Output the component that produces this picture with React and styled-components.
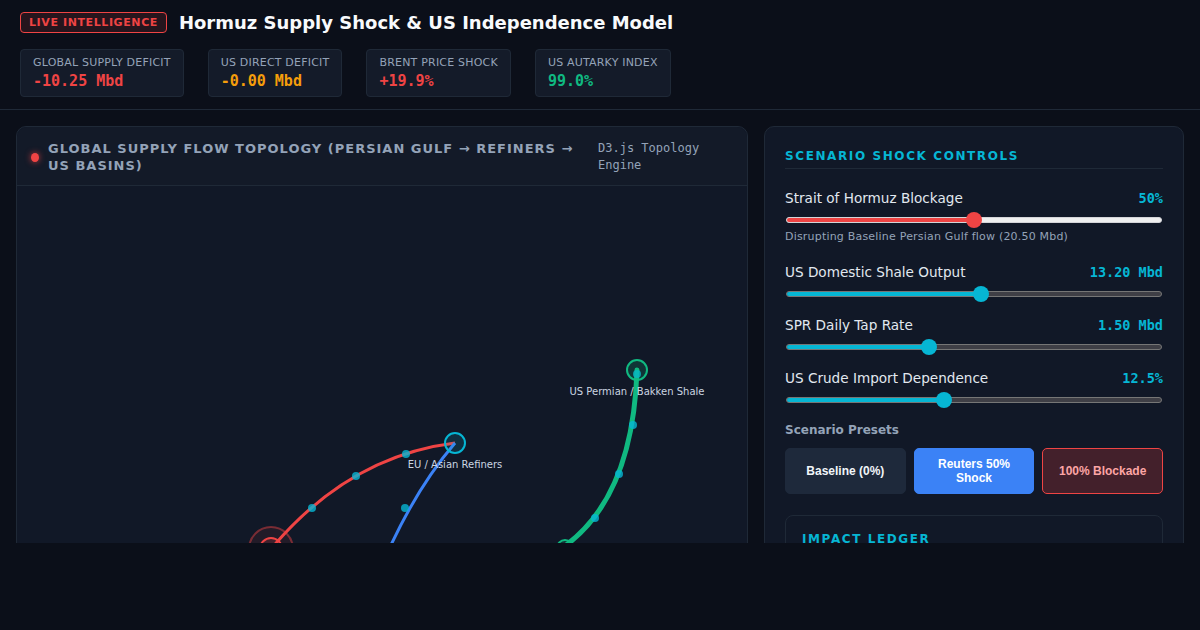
import React from "react";
import styled, { createGlobalStyle } from "styled-components";

const Global = createGlobalStyle`
  html, body { margin: 0; padding: 0; background: #0b0f19; }
  body { font-family: "DejaVu Sans", "Noto Sans", sans-serif; color: #e2e8f0; }
  * { box-sizing: border-box; }
`;

const Page = styled.div`
  width: 1200px;
  height: 543px;
  overflow: hidden;
  background: #0b0f19;
  display: flex;
  flex-direction: column;
`;

const Header = styled.header`
  padding: 12px 20px 12px;
  border-bottom: 1px solid #1f2937;
  display: flex;
  flex-direction: column;
  gap: 16px;
`;

const TitleRow = styled.div`
  display: flex;
  align-items: center;
  gap: 12px;
`;

const Badge = styled.span`
  font-size: 11px;
  font-weight: bold;
  letter-spacing: 0.6px;
  color: #ef4444;
  background: rgba(239, 68, 68, 0.12);
  border: 1px solid #ef4444;
  border-radius: 4px;
  padding: 3px 8px;
  line-height: 13px;
`;

const Title = styled.h1`
  margin: 0;
  font-size: 18px;
  font-weight: bold;
  color: #f8fafc;
`;

const Stats = styled.div`
  display: flex;
  gap: 24px;
`;

const StatCard = styled.div`
  background: #141b29;
  border: 1px solid #1f2937;
  border-radius: 4px;
  padding: 6px 12px 6px;
  display: flex;
  flex-direction: column;
  gap: 3px;
`;

const StatLabel = styled.div`
  font-size: 11px;
  letter-spacing: 0.2px;
  color: #94a3b8;
  text-transform: uppercase;
`;

const StatValue = styled.div`
  font-family: "DejaVu Sans Mono", monospace;
  font-size: 15px;
  font-weight: bold;
  color: ${(p) => p.$color};
`;

const Main = styled.main`
  flex: 1;
  display: flex;
  gap: 16px;
  padding: 16px;
  min-height: 0;
`;

const Panel = styled.section`
  background: #111827;
  border: 1px solid #1f2937;
  border-radius: 10px;
  ${(p) => (p.$width ? `width: ${p.$width}px; flex: none;` : "flex: 1;")}
  display: flex;
  flex-direction: column;
  min-height: 700px;
`;

const PanelHead = styled.div`
  display: flex;
  align-items: center;
  justify-content: space-between;
  gap: 20px;
  padding: 13px 16px 11px 14px;
  border-bottom: 1px solid #1f2937;
  background: #131a28;
  border-radius: 10px 10px 0 0;
`;

const HeadLeft = styled.div`
  display: flex;
  align-items: center;
  gap: 9px;
`;

const Dot = styled.span`
  width: 8px;
  height: 9px;
  border-radius: 50%;
  background: #ef4444;
  box-shadow: 0 0 6px rgba(239, 68, 68, 0.8);
  flex: none;
`;

const PanelTitle = styled.h2`
  margin: 0;
  font-size: 13px;
  font-weight: bold;
  letter-spacing: 1px;
  line-height: 17px;
  color: #94a3b8;
  text-transform: uppercase;
`;

const EngineTag = styled.span`
  font-family: "DejaVu Sans Mono", monospace;
  font-size: 12px;
  line-height: 17px;
  color: #94a3b8;
  width: 133px;
  flex: none;
`;

const Canvas = styled.svg`
  display: block;
  width: 100%;
  height: 520px;
`;

const NodeLabel = styled.text`
  font-family: "DejaVu Sans", sans-serif;
  font-size: 10px;
  fill: #cbd5e1;
  text-anchor: middle;
`;

const Controls = styled.div`
  padding: 22px 20px 20px;
  display: flex;
  flex-direction: column;
`;

const SectionTitle = styled.h3`
  margin: 0;
  font-size: 12px;
  font-weight: bold;
  letter-spacing: 1.6px;
  line-height: 15px;
  color: #06b6d4;
  text-transform: uppercase;
  padding-bottom: ${(p) => (p.$line ? "4px" : "0")};
  border-bottom: ${(p) => (p.$line ? "1px solid #1f2937" : "none")};
`;

const SliderGroup = styled.div`
  display: flex;
  flex-direction: column;
  gap: 16px;
  margin-top: 21px;
`;

const SliderBlock = styled.div`
  display: flex;
  flex-direction: column;
`;

const SliderHead = styled.div`
  display: flex;
  justify-content: space-between;
  align-items: baseline;
`;

const SliderLabel = styled.span`
  font-size: 13.6px;
  color: #e2e8f0;
`;

const SliderValue = styled.span`
  font-family: "DejaVu Sans Mono", monospace;
  font-size: 13.5px;
  font-weight: bold;
  color: #06b6d4;
`;

const Track = styled.div`
  position: relative;
  height: 6px;
  margin: 11px 1px 4px;
  border-radius: 3px;
  background: ${(p) => (p.$light ? "#efefef" : "#3f3f46")};
  border: 1px solid ${(p) => (p.$light ? "#d4d4d8" : "#767676")};
`;

const Fill = styled.div`
  height: 100%;
  border-radius: 3px;
  background: ${(p) => p.$color};
`;

const Thumb = styled.div`
  position: absolute;
  top: 50%;
  width: 16px;
  height: 16px;
  margin: -8px 0 0 -8px;
  border-radius: 50%;
  background: ${(p) => p.$color};
`;

const Note = styled.div`
  font-size: 11px;
  color: #94a3b8;
  margin: 3px 0 5px;
  letter-spacing: 0.2px;
`;

const PresetTitle = styled.div`
  font-size: 12px;
  font-weight: bold;
  color: #94a3b8;
  margin-top: 16px;
`;

const Presets = styled.div`
  display: grid;
  grid-template-columns: repeat(3, 1fr);
  gap: 8px;
  margin-top: 11px;
`;

const PresetButton = styled.button`
  height: 46px;
  border-radius: 5px;
  font-family: "Liberation Sans", Arial, sans-serif;
  font-size: 12px;
  font-weight: bold;
  line-height: 14px;
  padding: 0 10px;
  cursor: pointer;
  color: ${(p) => p.$fg};
  background: ${(p) => p.$bg};
  border: 1px solid ${(p) => p.$border || p.$bg};
`;

const Ledger = styled.div`
  margin-top: 21px;
  border: 1px solid #1f2937;
  border-radius: 8px;
  padding: 16px 16px;
  background: #111827;
  min-height: 200px;
`;

const sliders = [
  { label: "Strait of Hormuz Blockage", value: "50%", pct: 50, color: "#ef4444", light: true, note: "Disrupting Baseline Persian Gulf flow (20.50 Mbd)" },
  { label: "US Domestic Shale Output", value: "13.20 Mbd", pct: 52, color: "#06b6d4" },
  { label: "SPR Daily Tap Rate", value: "1.50 Mbd", pct: 38, color: "#06b6d4" },
  { label: "US Crude Import Dependence", value: "12.5%", pct: 42, color: "#06b6d4" },
];

const stats = [
  { label: "Global Supply Deficit", value: "-10.25 Mbd", color: "#ef4444" },
  { label: "US Direct Deficit", value: "-0.00 Mbd", color: "#f59e0b" },
  { label: "Brent Price Shock", value: "+19.9%", color: "#ef4444" },
  { label: "US Autarky Index", value: "99.0%", color: "#10b981" },
];

function Topology() {
  const particle = (x, y, k) => (
    <circle key={k} cx={x} cy={y} r="4" fill="#06b6d4" opacity="0.8" />
  );
  return (
    <Canvas viewBox="0 0 730 520" preserveAspectRatio="xMinYMin meet">
      <g transform="translate(0 1)">
        <path d="M254 362 Q332 269 438 256" fill="none" stroke="#ef4444" strokeWidth="3" />
        <path d="M345 430 Q383 320 438 256" fill="none" stroke="#3b82f6" strokeWidth="3" />
        <path d="M548 359 Q616 309 620 183" fill="none" stroke="#10b981" strokeWidth="5" strokeLinecap="round" />
        {[[295, 321], [339, 289], [389, 267], [388, 321], [578, 331], [602, 287], [616, 238], [620, 187]].map(
          ([x, y], i) => particle(x, y, i)
        )}
        <circle cx="254" cy="362" r="22" fill="rgba(239,68,68,0.08)" stroke="rgba(239,68,68,0.45)" strokeWidth="2" />
        <circle cx="254" cy="362" r="11" fill="rgba(239,68,68,0.15)" stroke="#ef4444" strokeWidth="2" />
        <circle cx="438" cy="256" r="10" fill="rgba(6,182,212,0.15)" stroke="#06b6d4" strokeWidth="2" />
        <NodeLabel x="438" y="281">EU / Asian Refiners</NodeLabel>
        <circle cx="620" cy="183" r="10" fill="rgba(16,185,129,0.18)" stroke="#10b981" strokeWidth="2" />
        <NodeLabel x="620" y="208">US Permian / Bakken Shale</NodeLabel>
        <circle cx="548" cy="361" r="8" fill="rgba(16,185,129,0.18)" stroke="#10b981" strokeWidth="2" />
      </g>
    </Canvas>
  );
}

export default function App() {
  return (
    <Page>
      <Global />
      <Header>
        <TitleRow>
          <Badge>LIVE INTELLIGENCE</Badge>
          <Title>Hormuz Supply Shock &amp; US Independence Model</Title>
        </TitleRow>
        <Stats>
          {stats.map((s) => (
            <StatCard key={s.label}>
              <StatLabel>{s.label}</StatLabel>
              <StatValue $color={s.color}>{s.value}</StatValue>
            </StatCard>
          ))}
        </Stats>
      </Header>
      <Main>
        <Panel>
          <PanelHead>
            <HeadLeft>
              <Dot />
              <PanelTitle>Global Supply Flow Topology (Persian Gulf → Refiners → US Basins)</PanelTitle>
            </HeadLeft>
            <EngineTag>D3.js Topology Engine</EngineTag>
          </PanelHead>
          <Topology />
        </Panel>
        <Panel $width={420}>
          <Controls>
            <SectionTitle $line>Scenario Shock Controls</SectionTitle>
            <SliderGroup>
              {sliders.map((s) => (
                <SliderBlock key={s.label}>
                  <SliderHead>
                    <SliderLabel>{s.label}</SliderLabel>
                    <SliderValue>{s.value}</SliderValue>
                  </SliderHead>
                  <Track $light={s.light}>
                    <Fill $color={s.color} style={{ width: `${s.pct}%` }} />
                    <Thumb $color={s.color} style={{ left: `${s.pct}%` }} />
                  </Track>
                  {s.note && <Note>{s.note}</Note>}
                </SliderBlock>
              ))}
            </SliderGroup>
            <PresetTitle>Scenario Presets</PresetTitle>
            <Presets>
              <PresetButton $bg="#1e293b" $fg="#f1f5f9">Baseline (0%)</PresetButton>
              <PresetButton $bg="#3b82f6" $fg="#ffffff">Reuters 50% Shock</PresetButton>
              <PresetButton $bg="#43202b" $fg="#fca5a5" $border="#ef4444">100% Blockade</PresetButton>
            </Presets>
            <Ledger>
              <SectionTitle>Impact Ledger</SectionTitle>
            </Ledger>
          </Controls>
        </Panel>
      </Main>
    </Page>
  );
}
